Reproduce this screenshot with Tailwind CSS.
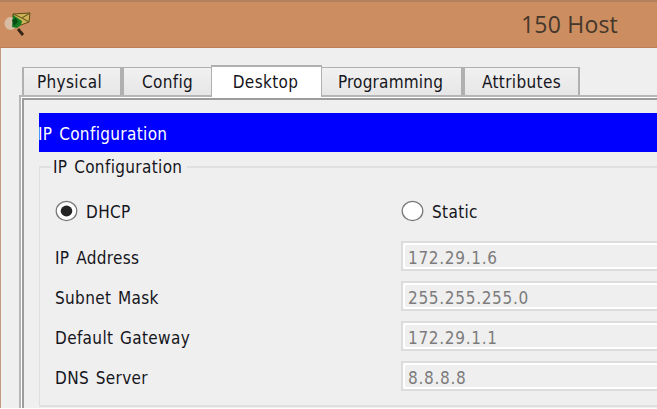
<!DOCTYPE html>
<html lang="en">
<head>
  <meta charset="UTF-8" />
  <meta name="viewport" content="width=device-width, initial-scale=1.0" />
  <title>150 Host</title>
  <script src="https://cdn.jsdelivr.net/npm/@tailwindcss/browser@4"></script>
</head>
<body class="h-[409px] w-[657px] overflow-hidden bg-white font-['DejaVu_Sans_Condensed','DejaVu_Sans',sans-serif] text-[17px] tracking-[0.35px] font-stretch-condensed text-[#151520] [word-spacing:1.5px]">

  <div class="flex h-[408px] flex-col overflow-hidden bg-[#efefef]">
    <header class="flex h-12 shrink-0 items-center justify-between border-t-2 border-b border-t-[#b1805d] border-b-[#bb7d55] bg-[#cc8e60] pr-[39px] pl-1">
      <svg class="-mt-0.5 h-6 w-7" viewBox="0 0 28 24">
        <path d="M9 2 L26 1 L25 10 L17 13 L9 9 Z" fill="#cdb356" stroke="#5d4a17" stroke-width="1" />
        <path d="M9 2 L18 6 L26 1 M18 6 L25 10" fill="none" stroke="#6b5a22" stroke-width="1.1" />
        <ellipse cx="6.5" cy="11.5" rx="6" ry="6.5" fill="#d8bda4" />
        <path d="M9 3 L12 5 L18 9 L17 13 L13 16 L8 15 Z" fill="#157c22" />
        <path d="M8 8 L12 6 L14 10 L10 14" fill="#074d16" />
        <path d="M14 17 L19 23" stroke="#352414" stroke-width="2.8" />
      </svg>
      <h1 class="font-['Open_Sans',sans-serif] text-[23px] leading-none font-normal tracking-[0.2px] text-[#44372b] font-stretch-normal [word-spacing:0px]">150 Host</h1>
    </header>

    <div class="flex grow flex-col border-l border-[#c49a80] pt-[17px] pl-[18px]">
      <nav class="relative z-10 -mb-[2px] ml-[3px] flex h-8 items-end whitespace-nowrap">
        <button class="mb-[2px] h-[28px] w-[100px] border-x-2 border-t border-[#b0b0b0] bg-linear-to-b from-[#f1f1f1] to-[#e6e6e6] pt-[2px] pr-[5px]">Physical</button>
        <button class="mb-[2px] h-[28px] w-[89px] border-t border-l-2 border-[#b0b0b0] bg-linear-to-b from-[#f1f1f1] to-[#e6e6e6] pt-[2px]">Config</button>
        <button class="h-8 w-[111px] border-x border-t-2 border-[#b0b0b0] bg-white pt-[1px] pr-[2px]">Desktop</button>
        <button class="mb-[2px] h-[28px] w-[141px] border-t border-r-2 border-[#b0b0b0] bg-linear-to-b from-[#f1f1f1] to-[#e6e6e6] pt-[2px] pr-[2px] tracking-[0.2px]">Programming</button>
        <button class="mb-[2px] h-[28px] w-[117px] border-x-2 border-t border-[#b0b0b0] bg-linear-to-b from-[#f1f1f1] to-[#e6e6e6] pt-[2px]">Attributes</button>
      </nav>

      <main class="grow border-t-2 border-l-2 border-[#b4b6b8]">
        <div class="h-full border-t border-l border-white">
          <div class="h-full border-t-2 border-l-2 border-[#9c9c9c] pt-[13px] pl-[15px]">
            <h2 class="h-[39px] bg-[#0000fe] pt-[9px] leading-6 text-white"><span class="-ml-px">IP Configuration</span></h2>

            <section class="mt-[3px]">
              <div class="flex h-[23px] items-center">
                <div class="mt-[2px] h-[12px] w-[12px] self-end border-t-2 border-l border-[#dfdfdf]"></div>
                <h3 class="pt-[2px] pr-[5px] pl-[2px] leading-none">IP Configuration</h3>
                <div class="mt-[2px] h-[12px] grow self-end border-t-2 border-[#dfdfdf]"></div>
              </div>
              <div class="h-[229px] border-b-2 border-l border-[#dfdfdf] pt-[21px] pl-[15px]">
                <div class="flex h-[24px] items-center">
                  <label class="flex w-[346px] items-center gap-[8px]">
                    <svg class="h-[22px] w-[23px]" viewBox="0 0 23 22">
                      <ellipse cx="11.5" cy="11" rx="10.3" ry="9.6" fill="#fff" stroke="#777" stroke-width="1.2" />
                      <ellipse cx="11.5" cy="11" rx="5.8" ry="5.4" fill="#242424" />
                    </svg>
                    <span class="pt-[3px]">DHCP</span>
                  </label>
                  <label class="flex items-center gap-[8px]">
                    <svg class="h-[22px] w-[23px]" viewBox="0 0 23 22">
                      <ellipse cx="11.5" cy="11" rx="10.3" ry="9.6" fill="#fff" stroke="#777" stroke-width="1.2" />
                    </svg>
                    <span class="pt-[3px]">Static</span>
                  </label>
                </div>
                <div id="fields" class="mt-[18px] flex flex-col gap-[10px]"></div>
              </div>
            </section>
          </div>
        </div>
      </main>
    </div>
  </div>

  <script>
    const fields = [
      ['IP Address', '172.29.1.6'],
      ['Subnet Mask', '255.255.255.0'],
      ['Default Gateway', '172.29.1.1'],
      ['DNS Server', '8.8.8.8'],
    ];

    document.getElementById('fields').innerHTML = fields.map(([label, value]) => `
      <div class="flex h-[30px] items-center">
        <span class="w-[346px] shrink-0 pt-[5px]">${label}</span>
        <div class="h-full grow border-y-2 border-l-2 border-[#dcdcdc]">
          <div class="flex h-full items-center border-y-2 border-l-2 border-white pt-[5px] pl-[3px] tracking-[0.7px] text-[#7c7c7c]">${value}</div>
        </div>
      </div>
    `).join('');
  </script>
</body>
</html>
